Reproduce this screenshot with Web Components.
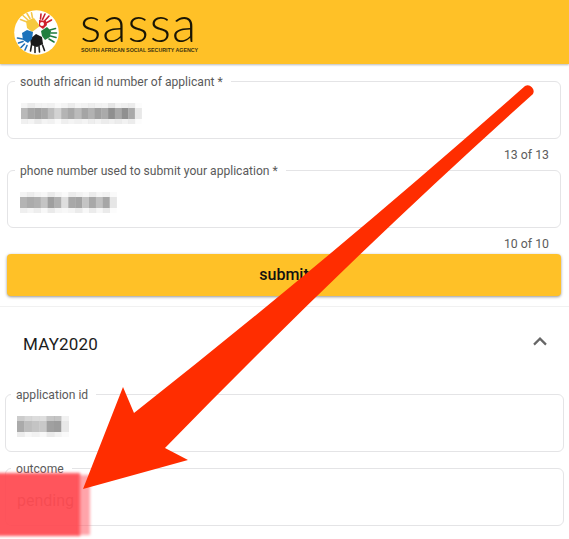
<!DOCTYPE html>
<html lang="en"><head><meta charset="utf-8"><title>SASSA</title>
<style>
html,body{margin:0;padding:0;background:#fff;overflow:hidden;width:569px;height:539px;font-family:Roboto,"Liberation Sans",sans-serif}
sassa-page{width:569px;height:539px}
</style></head><body>
<sassa-page>
  <sassa-header></sassa-header>
  <sassa-form>
    <sassa-field label="south african id number of applicant *" counter="13 of 13">
      <sassa-mosaic cols="b9b9b9,a6a6a6,a0a0a0,a8a8a8,bdbdbd,d2d2d2,b4b4b4,a8a8a8,bbbbbb,a5a5a5,b2b2b2,a0a0a0,aaaaaa,8f8f8f,a8a8a8,909090,a9a9a9,e8e8e8" cell="6.7" style="margin-left:1px"></sassa-mosaic>
    </sassa-field>
    <sassa-field label="phone number used to submit your application *" counter="10 of 10">
      <sassa-mosaic cols="b4b4b4,ababab,b0b0b0,c4c4c4,9f9f9f,b0b0b0,dedede,a8a8a8,a4a4a4,c4c4c4,a8a8a8,c0c0c0,a6a6a6,e6e6e6" cell="6.9"></sassa-mosaic>
    </sassa-field>
    <sassa-button>submit</sassa-button>
  </sassa-form>
  <sassa-accordion title="MAY2020">
    <sassa-field label="application id">
      <sassa-mosaic cols="aaaaaa,bdbdbd,c4c4c4,c8c8c8,a0a0a0,9c9c9c,e8e8e8" cell="7.4" light></sassa-mosaic>
    </sassa-field>
    <sassa-field label="outcome" value="pending"></sassa-field>
  </sassa-accordion>
  <sassa-annotation></sassa-annotation>
</sassa-page>
<script>
const def=(name,html)=>customElements.define(name,class extends HTMLElement{
  connectedCallback(){ if(this.shadowRoot) return; const r=this.attachShadow({mode:'open'}); r.innerHTML=typeof html==='function'?html(this):html; }
});
def('sassa-page',`<style>:host{display:block;position:relative;overflow:hidden}</style><slot></slot>`);
def('sassa-header',`<style>
:host{display:flex;align-items:flex-start;height:64px;background:#ffc127;box-shadow:0 1px 2px rgba(0,0,0,.28);position:relative;gap:21px;padding-left:14px}
svg{width:45px;height:45px;margin-top:10px;flex:none}
.brand{display:flex;flex-direction:column;color:#1a1608;width:125px}
.name{font:300 50px/40px Lato,sans-serif;letter-spacing:1px;height:40px;margin-top:3px;color:#191505}
.sub{font:700 5.3px/7px "Liberation Sans",sans-serif;white-space:nowrap;color:#3a3210;margin-top:4px;margin-left:1px}
</style>
<svg viewBox="0 0 45 45" aria-hidden="true">
<circle cx="22.5" cy="22.5" r="22.3" fill="#fff"/>
<g fill="none" stroke-linecap="round" stroke-width="1.6">
<g stroke="#f4c64a"><path d="M13 12 L6.5 9.5M14 10 L9 5.5M16 8.5 L13 3.5M18.5 8 L17.5 2.8"/></g>
<g stroke="#c9202c"><path d="M26.5 9 L27 4M28.5 9.5 L31 4M30.5 11 L35 6M32 13 L37.5 10"/></g>
<g stroke="#1f7a3c"><path d="M36 20 L41.5 18.5M37 23 L42.5 23M36.5 26 L42 27.5M35 29 L40 32"/></g>
<g stroke="#1f1f1f"><path d="M17.5 35 L16.5 41M21 36 L21 42.5M25 36 L25.5 42M28.5 35 L30.5 40.5"/></g>
<g stroke="#1f6fb5"><path d="M8.5 29 L3.5 28M9 31.5 L4.5 33M10.5 34 L7 37.5M13 35.5 L11 40"/></g>
</g>
<path d="M12 11 L20 8 L26 16 L18 22 L13 18Z" fill="#f6c93e"/>
<path d="M25 10 L32 11 L33 15 L29 19 L25 16Z" fill="#cf1f2b"/>
<circle cx="28" cy="14" r="2" fill="#fff"/>
<path d="M27 21 L33 17 L37 21 L36 27 L31 30 L28 26Z" fill="#1f7f3d"/>
<path d="M16 29 L22 24 L28 27 L29 34 L23 37 L17 35Z" fill="#1a1a1a"/>
<path d="M8 23 L13 20 L19 22 L18 29 L14 33 L9 30Z" fill="#1c72bb"/>
</svg>
<div class="brand"><div class="name">sassa</div><div class="sub">SOUTH AFRICAN SOCIAL SECURITY AGENCY</div></div>`);
def('sassa-form',`<style>:host{display:block;padding:17px 8px 10px 7px;border-bottom:1px solid #f1f1f1}</style><slot></slot>`);
def('sassa-field',el=>{
  const c=el.getAttribute('counter'),v=el.getAttribute('value');
  return `<style>
:host{display:block}
.box{position:relative;height:58px;box-sizing:border-box;border:1.4px solid #e4e4e6;border-radius:6px;display:flex;align-items:center;padding:7px 0 0 var(--pad-left,12px)}
.label{position:absolute;top:-8px;left:var(--label-left,7px);padding:0 8px 0 5px;background:#fff;font-size:12.1px;line-height:16px;color:#5a5a5a;white-space:nowrap}
.val{font-size:16px;color:#777}
.counter{height:31px;box-sizing:border-box;padding-right:12px;text-align:right;font-size:12.3px;line-height:32px;color:#5c5c5c}
:host(:last-of-type) .counter{height:26px;line-height:32px}
</style>
<div class="box"><span class="label">${el.getAttribute('label')}</span><slot></slot>${v?`<span class="val">${v}</span>`:''}</div>
${c?`<div class="counter">${c}</div>`:''}`;
});
def('sassa-mosaic',el=>{
  const cols=el.getAttribute('cols').split(','),w=+el.getAttribute('cell'),light=el.hasAttribute('light');
  const W=cols.length*w;
  let s='';
  cols.forEach((c,i)=>{
    s+=`<rect x="${i*w}" y="5" width="${w+.3}" height="11" fill="#${c}"/>`;
    s+=`<rect x="${i*w}" y="0" width="${w+.3}" height="5" fill="#${c}" opacity="${light?.6:(i%3==1?.22:.14)}"/>`;
    s+=`<rect x="${i*w}" y="16" width="${w+.3}" height="5" fill="#${c}" opacity="${i%2?.12:.22}"/>`;
  });
  return `<style>:host{display:block;line-height:0}svg{filter:blur(.5px);display:block}</style><svg width="${W}" height="21" viewBox="0 0 ${W} 21" aria-hidden="true">${s}</svg>`;
});
def('sassa-button',`<style>
:host{display:block;height:42px;border-radius:4px;background:#ffc127;box-shadow:0 1px 3px rgba(0,0,0,.42);text-align:center;font-weight:500;font-size:16px;line-height:42px;color:#111}
</style><slot></slot>`);
def('sassa-accordion',el=>`<style>
:host{display:block;--label-left:5px;--pad-left:11px}
.head{height:73px;display:flex;align-items:center;justify-content:space-between;padding:1px 21px 0 23px;box-sizing:border-box;font-size:17px;color:#1c1c1c;letter-spacing:.2px}
svg{width:16px;height:12px;display:block;margin-top:-7px}
.body{padding:14px 5px 0 5px;display:flex;flex-direction:column;gap:16px}
</style>
<div class="head"><span>${el.getAttribute('title')}</span><svg viewBox="0 0 16 12" aria-hidden="true"><path d="M2 9.6 L8 3.6 L14 9.6" fill="none" stroke="#666" stroke-width="2.2"/></svg></div>
<div class="body"><slot></slot></div>`);
def('sassa-annotation',`<style>
:host{position:absolute;inset:0;display:block;pointer-events:none}
svg{position:absolute;left:0;top:0}
.veil{position:absolute;left:-10px;top:473px;width:90px;height:63px;background:rgba(255,72,80,.93);filter:blur(1.4px)}
.ghost{position:absolute;left:78px;top:475px;width:12px;height:60px;background:rgba(255,90,100,.55);filter:blur(1.5px)}
</style>
<div class="ghost"></div><div class="veil"></div>
<svg width="569" height="539" viewBox="0 0 569 539" aria-hidden="true">
<path d="M83 489 L123 387 L134 413 Q329.5 259 525 86 A6 6 0 0 1 533 94 Q349 259 165 448 L188 460Z" fill="#ff2d00"/>
</svg>`);
</script>
</body></html>
